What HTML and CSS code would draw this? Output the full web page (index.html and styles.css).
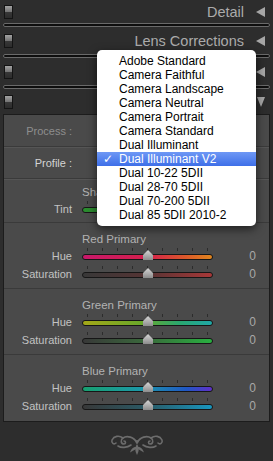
FILE: index.html
```html
<!DOCTYPE html>
<html lang="en">
<head>
    <meta charset="UTF-8">
    <meta name="viewport" content="width=device-width, initial-scale=1.0">
    <title>Develop - Camera Calibration</title>
    <link rel="stylesheet" href="styles.css">
</head>
<body>
    <div class="sidebar">
        <div class="head first">
            <span class="toggle"></span>
            <span class="title">Detail</span>
            <span class="arrow left"></span>
        </div>
        <div class="rule"></div>
        <div class="head">
            <span class="toggle"></span>
            <span class="title">Lens Corrections</span>
            <span class="arrow left"></span>
        </div>
        <div class="rule"></div>
        <div class="head">
            <span class="toggle"></span>
            <span class="title"></span>
            <span class="arrow left"></span>
        </div>
        <div class="rule"></div>
        <div class="head last">
            <span class="toggle"></span>
            <span class="title"></span>
            <span class="arrow down"></span>
        </div>

        <div class="panel">
            <div class="row process">
                <span class="label">Process :</span>
            </div>
            <div class="row profile">
                <span class="label">Profile :</span>
            </div>

            <div class="group shadows">
                <div class="group-title">Shadows</div>
                <div class="slider-row">
                    <span class="label">Tint</span>
                    <div class="track tint"><span class="thumb"></span></div>
                </div>
            </div>

            <div class="group">
                <div class="group-title">Red Primary</div>
                <div class="slider-row">
                    <span class="label">Hue</span>
                    <div class="track red-hue"><span class="thumb"></span></div>
                    <span class="num">0</span>
                </div>
                <div class="slider-row">
                    <span class="label">Saturation</span>
                    <div class="track red-sat"><span class="thumb"></span></div>
                    <span class="num">0</span>
                </div>
            </div>

            <div class="group">
                <div class="group-title">Green Primary</div>
                <div class="slider-row">
                    <span class="label">Hue</span>
                    <div class="track green-hue"><span class="thumb"></span></div>
                    <span class="num">0</span>
                </div>
                <div class="slider-row">
                    <span class="label">Saturation</span>
                    <div class="track green-sat"><span class="thumb"></span></div>
                    <span class="num">0</span>
                </div>
            </div>

            <div class="group">
                <div class="group-title">Blue Primary</div>
                <div class="slider-row">
                    <span class="label">Hue</span>
                    <div class="track blue-hue"><span class="thumb"></span></div>
                    <span class="num">0</span>
                </div>
                <div class="slider-row">
                    <span class="label">Saturation</span>
                    <div class="track blue-sat"><span class="thumb"></span></div>
                    <span class="num">0</span>
                </div>
            </div>
        </div>

        <div class="ornament">
            <svg width="54" height="24" viewBox="0 0 54 24">
                <g fill="none" stroke="#6c6c6c" stroke-width="1.6" stroke-linecap="round">
                    <path d="M27 11 C24 5 17 3 13 6 C10 8 11 12 14 12 C16 12 16 9 14 9"/>
                    <path d="M27 11 C30 5 37 3 41 6 C44 8 43 12 40 12 C38 12 38 9 40 9"/>
                    <path d="M13 6 C9 3 4 4 2 8 C1 11 4 13 6 11"/>
                    <path d="M41 6 C45 3 50 4 52 8 C53 11 50 13 48 11"/>
                    <path d="M21 13 C17 16 11 16 8 14"/>
                    <path d="M33 13 C37 16 43 16 46 14"/>
                </g>
                <g fill="#6c6c6c">
                    <path d="M27 23 C25 19 24.5 16 27 12 C29.5 16 29 19 27 23Z"/>
                    <path d="M26 15 C22.5 15 21 17.5 20 20.5 C22.5 19 24.5 18 26 17Z"/>
                    <path d="M28 15 C31.5 15 33 17.5 34 20.5 C31.5 19 29.5 18 28 17Z"/>
                    <circle cx="27" cy="9.5" r="1.6"/>
                </g>
            </svg>
        </div>

        <ul class="menu">
            <li>Adobe Standard</li>
            <li>Camera Faithful</li>
            <li>Camera Landscape</li>
            <li>Camera Neutral</li>
            <li>Camera Portrait</li>
            <li>Camera Standard</li>
            <li>Dual Illuminant</li>
            <li class="selected"><span class="check">✓</span>Dual Illuminant V2</li>
            <li>Dual 10-22 5DII</li>
            <li>Dual 28-70 5DII</li>
            <li>Dual 70-200 5DII</li>
            <li>Dual 85 5DII 2010-2</li>
        </ul>
    </div>
</body>
</html>
```

FILE: styles.css
```css
body {
    margin: 0;
    background: #2d2d2d;
    font-family: "Liberation Sans", Arial, sans-serif;
}

.sidebar {
    position: relative;
    width: 273px;
    height: 461px;
    overflow: hidden;
}

/* panel headers */
.head {
    display: flex;
    align-items: center;
    height: 27px;
    padding: 0 8px 0 4px;
    box-sizing: border-box;
}

.head.first {
    height: 23px;
}

.head.last {
    height: 25px;
}

.toggle {
    width: 9px;
    height: 14px;
    box-sizing: border-box;
    border: 1px solid #141414;
    background: linear-gradient(#a2a2a2, #727272 50%, #383838 50%, #2c2c2c);
}

.title {
    margin-left: auto;
    font-size: 14.5px;
    color: #ababab;
}

.arrow.left {
    width: 0;
    height: 0;
    border-top: 5px solid transparent;
    border-bottom: 5px solid transparent;
    border-right: 9px solid #a6a6a6;
    margin-left: 12px;
}

.arrow.down {
    width: 0;
    height: 0;
    border-left: 4.5px solid transparent;
    border-right: 4.5px solid transparent;
    border-top: 10px solid #a6a6a6;
    margin-left: 12px;
}

.rule {
    height: 4px;
    margin: 0 3px;
    box-sizing: border-box;
    border: 1px solid #6a6a6a;
    border-radius: 2px;
    background: #0e0e0e;
}

/* calibration panel */
.panel {
    margin: 0 3px;
    border: 1px solid #1c1c1c;
    background: #4a4a4a;
    height: 308px;
    box-sizing: border-box;
}

.row {
    display: flex;
    align-items: center;
    height: 31px;
    border-bottom: 1px solid #3a3a3a;
    box-shadow: 0 1px 0 #555;
    font-size: 11px;
}

.row .label {
    width: 68px;
    text-align: right;
    margin-right: 10px;
}

.process .label {
    color: #8e8e8e;
}

.profile .label {
    color: #d4d4d4;
}

.group {
    padding: 8px 0 5px;
    border-bottom: 1px solid #3a3a3a;
}

.group:last-child {
    border-bottom: none;
}

.group.shadows {
    padding: 5px 0 4px;
}

.group-title {
    height: 16px;
    line-height: 16px;
    padding-left: 78px;
    font-size: 11.5px;
    color: #b2b2b2;
}

.slider-row {
    display: flex;
    align-items: center;
    height: 18px;
    font-size: 11px;
    color: #c2c2c2;
}

.slider-row .label {
    width: 68px;
    text-align: right;
    margin-right: 10px;
}

.track {
    position: relative;
    width: 131px;
    height: 6px;
    box-sizing: border-box;
    border: 1px solid #161616;
    border-radius: 3px;
    margin-top: 2px;
}

/* tick marks above the track */
.track::before {
    content: "";
    position: absolute;
    left: 4px;
    top: -7px;
    width: 121px;
    height: 3px;
    background: repeating-linear-gradient(to right, #2c2c2c 0 1px, transparent 1px 15px);
}

.thumb {
    position: absolute;
    left: 60px;
    top: -5px;
    width: 10px;
    height: 10px;
    background: linear-gradient(#d6d6d6, #8c8c8c);
    clip-path: polygon(50% 0, 100% 50%, 100% 100%, 0 100%, 0 50%);
    filter: drop-shadow(0 0 0.5px #111);
}

.num {
    flex: 1;
    text-align: right;
    padding-right: 13px;
    font-size: 12px;
    color: #a8a8a8;
}

.tint { background: linear-gradient(to right, #2a8c2e, #3c8a3c 50%, #8a3a8a); }
.red-hue { background: linear-gradient(to right, #c8186a, #d4204c 50%, #dc5a2a 80%, #e0861e); }
.red-sat { background: linear-gradient(to right, #383838, #563434 50%, #a83838); }
.green-hue { background: linear-gradient(to right, #a4a818, #6aa82a 45%, #2aa870 75%, #20a8a8); }
.green-sat { background: linear-gradient(to right, #383838, #3a6a3c 50%, #28b040); }
.blue-hue { background: linear-gradient(to right, #18a070, #1c98a8 45%, #2058c4 80%, #6030c8); }
.blue-sat { background: linear-gradient(to right, #383838, #2a5a66 50%, #1896be); }

.ornament {
    display: flex;
    justify-content: center;
    padding-top: 10px;
}

/* profile popup menu */
.menu {
    position: absolute;
    left: 97px;
    top: 50px;
    width: 159px;
    margin: 0;
    padding: 4px 0;
    list-style: none;
    background: #fff;
    border-radius: 5px;
    box-shadow: 0 3px 10px rgba(0, 0, 0, 0.6);
    font-size: 12px;
    line-height: 14px;
    color: #000;
}

.menu li {
    padding-left: 22px;
    white-space: nowrap;
}

.menu li.selected {
    padding-left: 6px;
    color: #fff;
    background: linear-gradient(#6e98f5, #3e6fe8);
}

.check {
    display: inline-block;
    width: 16px;
    font-family: "DejaVu Sans", sans-serif;
    font-size: 12px;
}
```
